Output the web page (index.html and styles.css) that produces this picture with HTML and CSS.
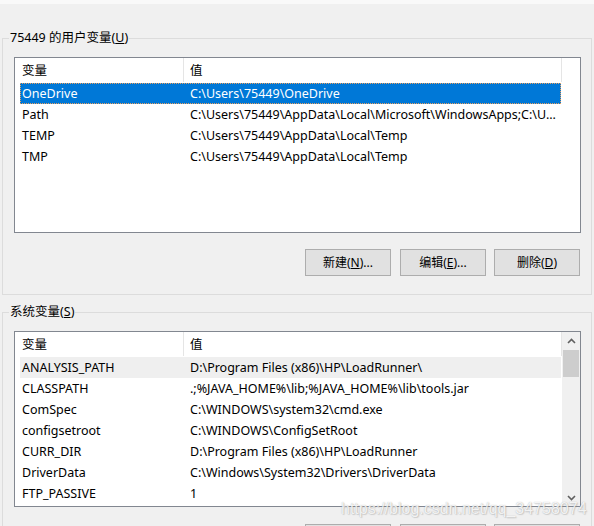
FILE: index.html
```html
<!DOCTYPE html>
<html lang="zh-CN">
<head>
<meta charset="utf-8">
<title>环境变量</title>
<link rel="stylesheet" href="styles.css">
</head>
<body>
<div class="top-strip"></div>

<section class="group group-user">
  <div class="group-title">75449 的用户变量(<u>U</u>)</div>
  <div class="listbox">
    <div class="lv-main">
      <div class="lv-header">
        <div class="hcell c1">变量</div>
        <div class="hcell c2">值</div>
      </div>
      <div class="row selected"><span class="name">OneDrive</span><span class="val">C:\Users\75449\OneDrive</span></div>
      <div class="row"><span class="name">Path</span><span class="val">C:\Users\75449\AppData\Local\Microsoft\WindowsApps;C:\U...</span></div>
      <div class="row"><span class="name">TEMP</span><span class="val">C:\Users\75449\AppData\Local\Temp</span></div>
      <div class="row"><span class="name">TMP</span><span class="val">C:\Users\75449\AppData\Local\Temp</span></div>
    </div>
  </div>
  <div class="buttons">
    <button class="btn">新建(<u>N</u>)...</button>
    <button class="btn">编辑(<u>E</u>)...</button>
    <button class="btn">删除(<u>D</u>)</button>
  </div>
</section>

<section class="group group-sys">
  <div class="group-title">系统变量(<u>S</u>)</div>
  <div class="listbox">
    <div class="lv-main">
      <div class="lv-header">
        <div class="hcell c1">变量</div>
        <div class="hcell c2">值</div>
      </div>
      <div class="row hover"><span class="name">ANALYSIS_PATH</span><span class="val">D:\Program Files (x86)\HP\LoadRunner\</span></div>
      <div class="row"><span class="name">CLASSPATH</span><span class="val">.;%JAVA_HOME%\lib;%JAVA_HOME%\lib\tools.jar</span></div>
      <div class="row"><span class="name">ComSpec</span><span class="val">C:\WINDOWS\system32\cmd.exe</span></div>
      <div class="row"><span class="name">configsetroot</span><span class="val">C:\WINDOWS\ConfigSetRoot</span></div>
      <div class="row"><span class="name">CURR_DIR</span><span class="val">D:\Program Files (x86)\HP\LoadRunner</span></div>
      <div class="row"><span class="name">DriverData</span><span class="val">C:\Windows\System32\Drivers\DriverData</span></div>
      <div class="row"><span class="name">FTP_PASSIVE</span><span class="val">1</span></div>
    </div>
    <div class="scrollbar">
      <div class="sb-btn">
        <svg width="9" height="6" viewBox="0 0 9 6"><path d="M1 5 L4.5 1.5 L8 5" fill="none" stroke="#606060" stroke-width="1.6"/></svg>
      </div>
      <div class="sb-thumb"></div>
      <div class="sb-track"></div>
      <div class="sb-btn">
        <svg width="9" height="6" viewBox="0 0 9 6"><path d="M1 1 L4.5 4.5 L8 1" fill="none" stroke="#606060" stroke-width="1.6"/></svg>
      </div>
    </div>
  </div>
  <div class="buttons">
    <button class="btn" aria-label="新建"></button>
    <button class="btn" aria-label="编辑"></button>
    <button class="btn" aria-label="删除"></button>
  </div>
</section>

<div class="watermark">https://blog.csdn.net/qq_34758074</div>
</body>
</html>
```

FILE: styles.css
```css
html, body {
  margin: 0;
  padding: 0;
  width: 594px;
  height: 526px;
  overflow: hidden;
}

body {
  position: relative;
  background: #f0f0f0;
  font-family: "Noto Sans", "Noto Sans CJK SC", sans-serif;
  font-size: 12.5px;
  color: #000;
}

.top-strip {
  height: 4px;
  background: #f9f9f9;
}

.group {
  box-sizing: border-box;
  width: 590px;
  margin-left: 2px;
  border: 1px solid #dcdcdc;
  padding: 0 0 18px 0;
}

.group-user {
  margin-top: 34px;
  height: 257px;
}

.group-sys {
  margin-top: 17px;
}

.group-title {
  width: fit-content;
  margin: -9px 0 0 6px;
  padding: 0 1px;
  line-height: 16px;
  height: 16px;
  background: #f0f0f0;
  white-space: nowrap;
}

.listbox {
  box-sizing: border-box;
  height: 176px;
  margin: 11px 10px 0 11px;
  border: 1px solid #828790;
  background: #fff;
  display: flex;
  overflow: hidden;
}

.lv-main {
  flex: 1;
  min-width: 0;
}

.lv-header {
  display: flex;
  height: 25px;
  line-height: 25px;
}

.hcell {
  box-sizing: border-box;
  border-right: 1px solid #e5e5e5;
  height: 24px;
  white-space: nowrap;
}

.hcell.c1 {
  width: 169px;
  padding-left: 7px;
}

.hcell.c2 {
  width: 378px;
  padding-left: 6px;
}

.row {
  box-sizing: border-box;
  display: grid;
  grid-template-columns: 168px 1fr;
  width: 541px;
  height: 21px;
  line-height: 21px;
  margin-left: 5px;
  padding-left: 2px;
  white-space: nowrap;
  overflow: hidden;
}

.row .val {
  overflow: hidden;
}

.row.selected {
  background: #0078d7;
  color: #fff;
  outline: 1px dotted #e8a060;
  outline-offset: -1px;
}

.row.hover {
  background: #efefef;
}

.scrollbar {
  flex: none;
  width: 18px;
  background: #f0f0f0;
  display: flex;
  flex-direction: column;
}

.sb-btn {
  height: 17px;
  display: flex;
  align-items: center;
  justify-content: center;
}

.sb-thumb {
  height: 27px;
  margin: 1px 1px 0 1px;
  background: #cdcdcd;
}

.sb-track {
  flex: 1;
}

.buttons {
  display: flex;
  justify-content: flex-end;
  gap: 9px;
  margin: 16px 11px 0 0;
}

.group-sys .buttons {
  margin-top: 17px;
}

.btn {
  box-sizing: border-box;
  width: 86px;
  height: 27px;
  padding: 0;
  border: 1px solid #adadad;
  background: #e1e1e1;
  font-family: "Noto Sans", "Noto Sans CJK SC", sans-serif;
  font-size: 12px;
  color: #000;
  line-height: 25px;
}

.btn + .btn + .btn {
  margin-left: -1px;
}

.watermark {
  position: absolute;
  left: 341px;
  top: 500px;
  font-family: "Liberation Sans", sans-serif;
  font-size: 16px;
  line-height: 17px;
  color: rgba(255, 255, 255, 0.85);
  text-shadow: 0 0 1px rgba(110, 110, 110, 0.5), 1px 1px 1px rgba(140, 140, 140, 0.3);
  white-space: nowrap;
  pointer-events: none;
}
```
